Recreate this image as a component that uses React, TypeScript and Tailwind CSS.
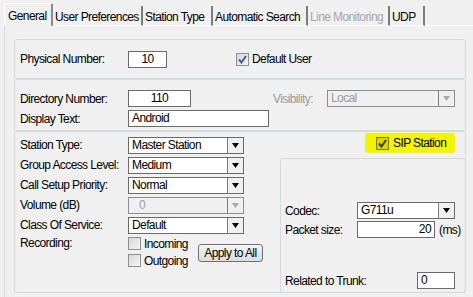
import React from 'react';

const font = { fontFamily: '"Liberation Sans", Arial, sans-serif' };

// --- small win32-ish controls ---
const Arrow: React.FC<{ disabled?: boolean }> = ({ disabled }) => (
    <div className="w-[16px] h-full border-l border-[#7a7a7a] flex items-center justify-center bg-[#f0f0f0]">
        <svg width="7" height="5" viewBox="0 0 7 5">
            <path d="M0 0 H7 L3.5 5 Z" fill={disabled ? '#a8a8a8' : '#000'} />
        </svg>
    </div>
);

const Select: React.FC<{ value: string; w: string; disabled?: boolean }> = ({ value, w, disabled }) => (
    <div className={`${w} h-[17px] flex border ${disabled ? 'border-[#8c8c8c] bg-[#f0f0f0] text-[#9a9a9a]' : 'border-[#6a6a6a] bg-white text-black'}`}>
        <div className={`flex-1 pl-[3px] leading-[15px] ${disabled && value === '0' ? 'pl-[10px]' : ''}`}>{value}</div>
        <Arrow disabled={disabled} />
    </div>
);

const Input: React.FC<{ value: string; w: string; align?: string }> = ({ value, w, align = 'text-center' }) => (
    <div className={`${w} h-[17px] border border-[#6a6a6a] bg-white leading-[15px] px-[3px] ${align}`}>{value}</div>
);

const Check: React.FC<{ checked?: boolean; tone?: 'blue' | 'olive' }> = ({ checked, tone = 'blue' }) => (
    <div
        className={`w-[13px] h-[13px] shrink-0 border flex items-center justify-center ${
            tone === 'olive'
                ? 'border-[#7a7a00] bg-[#d8d800]'
                : 'border-[#8e8f8f] bg-gradient-to-br from-[#d6d6d6] to-[#f6f6f6]'
        }`}
    >
        {checked && (
            <svg width="9" height="9" viewBox="0 0 9 9">
                <path d="M1 4.5 L3.5 7.5 L8 1" fill="none" stroke={tone === 'olive' ? '#404000' : '#3c5ea8'} strokeWidth="2" />
            </svg>
        )}
    </div>
);

const Label: React.FC<{ children: React.ReactNode; w?: string; className?: string }> = ({ children, w = 'w-[108px]', className = '' }) => (
    <div className={`${w} shrink-0 ${className}`}>{children}</div>
);

const Group: React.FC<{ className?: string; children: React.ReactNode }> = ({ className = '', children }) => (
    <div className={`border border-[#d3d9df] rounded-[3px] ${className}`}>{children}</div>
);

const tabs = [
    { name: 'General', w: 'w-[49px]' },
    { name: 'User Preferences', w: 'w-[90px]' },
    { name: 'Station Type', w: 'w-[70px]' },
    { name: 'Automatic Search', w: 'w-[95px]' },
    { name: 'Line Monitoring', w: 'w-[82px]', disabled: true },
    { name: 'UDP', w: 'w-[35px]' },
];

export default function App() {
    return (
        <div className="w-[473px] h-[297px] bg-[#f0f0f0] overflow-hidden text-[12px] tracking-[-0.6px] whitespace-nowrap text-black" style={font}>
            {/* tab strip */}
            <div className="h-[26px] flex items-end pl-[4px]">
                {tabs.map((t, i) =>
                    i === 0 ? (
                        <div key={t.name} className={`${t.w} h-[23px] border-t border-l border-white border-r-2 border-r-[#8a8a8a] rounded-t-[2px] pl-[3px] pt-[3px]`}>
                            {t.name}
                        </div>
                    ) : (
                        <div
                            key={t.name}
                            className={`${t.w} h-[20px] border-b border-white border-r-2 border-r-[#7c7c7c] pl-[2px] pt-[2px] ${t.disabled ? 'text-[#a6a6a6]' : ''}`}
                        >
                            {t.name}
                        </div>
                    )
                )}
                <div className="flex-1 h-[1px] bg-white" />
            </div>

            {/* tab page */}
            <div className="ml-[4px] h-[271px] border-l border-[#dadada] pl-[9px] pt-[13px] pr-[7px]">
                <Group className="h-[40px] flex items-center pl-[5px]">
                    <Label>Physical Number:</Label>
                    <Input value="10" w="w-[39px]" />
                    <div className="ml-[69px] flex items-center gap-[3px]">
                        <Check checked />
                        <span>Default User</span>
                    </div>
                </Group>

                <Group className="h-[52px] pl-[5px] pt-[10px] flex flex-col gap-[3px]">
                    <div className="flex items-center h-[17px]">
                        <Label>Directory Number:</Label>
                        <Input value="110" w="w-[63px]" />
                        <span className="ml-[82px] w-[54px] text-[#9a9a9a]">Visibility:</span>
                        <Select value="Local" w="w-[128px]" disabled />
                    </div>
                    <div className="flex items-center h-[17px]">
                        <Label>Display Text:</Label>
                        <Input value="Android" w="w-[141px]" align="text-left" />
                    </div>
                </Group>

                <Group className="h-[162px] flex">
                    <div className="w-[264px] pl-[5px] pt-[3px] flex flex-col">
                        {[
                            ['Station Type:', 'Master Station'],
                            ['Group Access Level:', 'Medium'],
                            ['Call Setup Priority:', 'Normal'],
                            ['Volume (dB)', '0'],
                            ['Class Of Service:', 'Default'],
                        ].map(([l, v]) => (
                            <div key={l} className="h-[20px] flex items-center">
                                <Label>{l}</Label>
                                <Select value={v} w="w-[116px]" disabled={l === 'Volume (dB)'} />
                            </div>
                        ))}
                        <div className="flex pt-[2px]">
                            <Label className="leading-[13px]">Recording:</Label>
                            <div className="flex flex-col gap-[4px]">
                                <div className="flex items-center gap-[3px] h-[13px]">
                                    <Check />
                                    <span>Incoming</span>
                                </div>
                                <div className="flex items-center gap-[3px] h-[13px]">
                                    <Check />
                                    <span>Outgoing</span>
                                </div>
                            </div>
                            <div className="ml-[10px] mt-[7px] w-[65px] h-[18px] border border-[#707070] rounded-[3px] bg-gradient-to-b from-[#f4f4f4] to-[#dcdcdc] text-center leading-[16px]">
                                Apply to All
                            </div>
                        </div>
                    </div>

                    <div className="flex-1 flex flex-col -mr-[1px] -mb-[1px] ml-[1px]">
                        <div className="h-[26px] flex justify-end pr-[11px] pt-[1px]">
                            <div className="h-[20px] w-[90px] bg-[#f4f400] rounded-[3px] flex items-center pl-[11px] gap-[4px]">
                                <Check checked tone="olive" />
                                <span>SIP Station</span>
                            </div>
                        </div>
                        <Group className="flex-1 pl-[4px] pt-[43px]">
                            <div className="flex items-center h-[17px]">
                                <Label w="w-[72px]">Codec:</Label>
                                <Select value="G711u" w="w-[98px]" />
                            </div>
                            <div className="flex items-center h-[17px] mt-[2px]">
                                <Label w="w-[72px]">Packet size:</Label>
                                <Input value="20" w="w-[78px]" align="text-right" />
                                <span className="ml-[4px]">(ms)</span>
                            </div>
                            <div className="flex items-center h-[17px] mt-[34px]">
                                <Label w="w-[132px]">Related to Trunk:</Label>
                                <Input value="0" w="w-[38px]" align="text-left" />
                            </div>
                        </Group>
                    </div>
                </Group>
            </div>
        </div>
    );
}
